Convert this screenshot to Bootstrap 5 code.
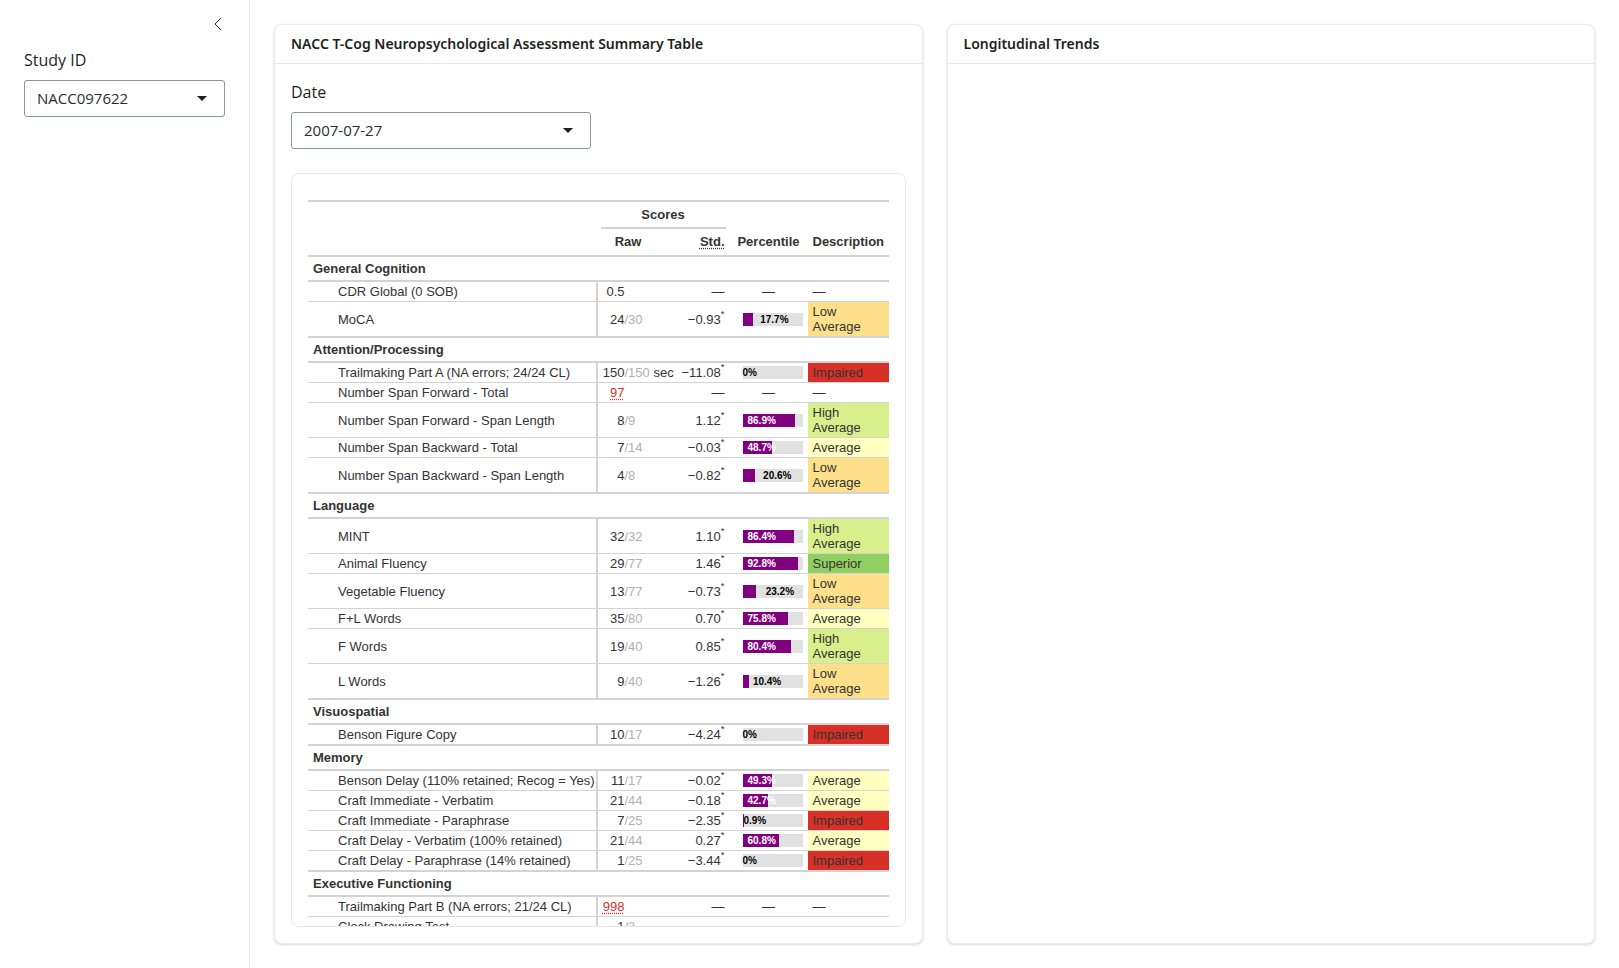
<!DOCTYPE html>
<html lang="en">
<head>
<meta charset="utf-8">
<meta name="viewport" content="width=device-width, initial-scale=1">
<title>NACC T-Cog Neuropsychological Assessment</title>
<link href="https://cdn.jsdelivr.net/npm/bootstrap@5.3.0/dist/css/bootstrap.min.css" rel="stylesheet">
<style>
  body { font-family: "Open Sans", "Noto Sans", sans-serif; font-size: 16px; line-height: 24px; color: #1d1f21; background: #fff; }
  .side-panel { width: 250px; border-right: 1px solid #e6e6e6; padding: 16px 24px; }
  .collapse-btn { width: 16px; height: 16px; line-height: 0; margin-right: -1px; }
  .picker { appearance: none; height: 37px; padding: 0 12px 2px; font-size: 15px; color: #2b2d30; border: 1px solid #8d959e; border-radius: 3px;
    background: #fff url("data:image/svg+xml,%3Csvg xmlns='http://www.w3.org/2000/svg' viewBox='0 0 10 5'%3E%3Cpath d='M0 0h10L5 5z' fill='%231d1f21'/%3E%3C/svg%3E") no-repeat right 17px top 15px / 10px 5px; }
  .picker-date { width: 300px; max-width: 100%; }
  .panel { border: 1px solid #ebebeb; border-radius: 8px; box-shadow: 0 1px 3px rgba(0,0,0,.16); }
  .panel > .card-header { background: none; border-bottom: 1px solid #e8e8e8; padding: 8px 16px; font-family: "Noto Sans", "Open Sans", sans-serif; font-size: 14px; line-height: 22px; font-weight: 600; }
  .table-frame { border: 1px solid #e8e8e8; border-radius: 8px; padding: 26px 16px 0; overflow: auto; scrollbar-width: none; }
  .scores { width: 100%; table-layout: fixed; border-collapse: separate; border-spacing: 0; border-top: 2px solid #d3d3d3;
    font-family: "Liberation Sans", Arial, sans-serif; font-size: 13px; line-height: 15px; color: #333; }
  .c-raw { width: 78px; } .c-std { width: 54px; } .c-pct { width: 78px; } .c-desc { width: 81px; }
  .scores th { font-weight: 700; white-space: nowrap; }
  .scores thead th { padding: 5px; }
  .scores thead .spanner { padding: 0 4px 0 3px; }
  .spanner div { padding: 5px 0; border-bottom: 2px solid #d3d3d3; }
  .scores thead tr:last-child th, .scores thead th[rowspan] { border-bottom: 2px solid #d3d3d3; padding-bottom: 6px; }
  .scores thead .raw-head { padding-right: 22px; }
  .scores .domain th { padding: 4px 5px; border-bottom: 2px solid #d3d3d3; }
  .scores td, .scores .test { padding: 2px 5px; border-bottom: 1px solid #d3d3d3; vertical-align: middle; }
  .scores .test { font-weight: 400; padding-left: 30px; padding-right: 0; border-right: 2px solid #d3d3d3; }
  .scores td:nth-child(2) { padding-right: 0; white-space: nowrap; }
  .scores td:nth-child(3) { padding-left: 0; text-align: right; white-space: nowrap; }
  .scores td:nth-child(4) { text-align: center; }
  .scores .end > * { border-bottom-width: 2px; }
  .scores b { display: inline-block; width: 22px; text-align: right; font-weight: 400; }
  .scores i { font-style: normal; color: #b0b0b0; }
  .scores sup { top: -7px; }
  .scores abbr { cursor: help; text-decoration: underline dotted; text-underline-offset: 2px; }
  .miss { color: #d7302f; }
  .meter-bar { width: 60px; height: 13px; margin-left: auto; background: #e1e1e1; position: relative; text-align: left; font-size: 10px; line-height: 13px; font-weight: 700; color: #000; }
  .meter-bar div { height: 100%; background: purple; }
  .meter-bar span { position: absolute; top: 0; left: 5px; color: #fff; }
  .meter-bar .out { color: #000; }
  .lowavg { background: #fee08b; } .highavg { background: #d9ef8b; } .avg { background: #ffffbf; } .sup { background: #91cf60; } .imp { background: #d73027; }
</style>
</head>
<body>
<div class="d-flex vh-100">
  <aside class="side-panel flex-shrink-0">
    <div class="d-flex justify-content-end mb-3">
      <button type="button" class="collapse-btn btn border-0 p-0" aria-label="Toggle sidebar">
        <svg width="16" height="16" viewBox="0 0 16 16" fill="none" stroke="#1d1f21" stroke-linecap="round" stroke-linejoin="round"><path d="M11 2 5 8l6 6"/></svg>
      </button>
    </div>
    <label for="study" class="d-block mb-2">Study ID</label>
    <select id="study" class="picker w-100"><option>NACC097622</option></select>
  </aside>
  <main class="d-flex flex-grow-1 gap-4 p-4" style="min-width:0">
    <section class="card panel flex-fill w-50">
      <div class="card-header">NACC T-Cog Neuropsychological Assessment Summary Table</div>
      <div class="card-body d-flex flex-column p-3 overflow-hidden">
        <label for="date" class="mb-2">Date</label>
        <select id="date" class="picker picker-date flex-shrink-0 mb-4"><option>2007-07-27</option></select>
        <div class="table-frame flex-fill">
          <table class="scores">
            <colgroup><col><col class="c-raw"><col class="c-std"><col class="c-pct"><col class="c-desc"></colgroup>
            <thead>
              <tr><th rowspan="2"></th><th colspan="2" class="spanner text-center"><div>Scores</div></th><th></th><th></th></tr>
              <tr><th class="raw-head text-center">Raw</th><th class="text-end"><abbr title="Standardized score">Std.</abbr></th><th class="text-center">Percentile</th><th>Description</th></tr>
            </thead>
            <tbody>
              <tr class="domain"><th colspan="5">General Cognition</th></tr>
              <tr><th class="test">CDR Global (0 SOB)</th><td><b>0.5</b></td><td>—</td><td>—</td><td>—</td></tr>
              <tr class="end"><th class="test">MoCA</th><td><b>24</b><i>/30</i></td><td>−0.93<sup>*</sup></td><td><div class="meter-bar"><div style="width:17.7%"></div><span class="out" style="left:17.7px">17.7%</span></div></td><td class="lowavg">Low Average</td></tr>

              <tr class="domain"><th colspan="5">Attention/Processing</th></tr>
              <tr><th class="test">Trailmaking Part A (NA errors; 24/24 CL)</th><td><b>150</b><i>/150</i> sec</td><td>−11.08<sup>*</sup></td><td><div class="meter-bar"><span class="out" style="left:0">0%</span></div></td><td class="imp">Impaired</td></tr>
              <tr><th class="test">Number Span Forward - Total</th><td><b><abbr class="miss" title="Not administered">97</abbr></b></td><td>—</td><td>—</td><td>—</td></tr>
              <tr><th class="test">Number Span Forward - Span Length</th><td><b>8</b><i>/9</i></td><td>1.12<sup>*</sup></td><td><div class="meter-bar"><div style="width:86.9%"></div><span>86.9%</span></div></td><td class="highavg">High Average</td></tr>
              <tr><th class="test">Number Span Backward - Total</th><td><b>7</b><i>/14</i></td><td>−0.03<sup>*</sup></td><td><div class="meter-bar"><div style="width:48.7%"></div><span>48.7%</span></div></td><td class="avg">Average</td></tr>
              <tr class="end"><th class="test">Number Span Backward - Span Length</th><td><b>4</b><i>/8</i></td><td>−0.82<sup>*</sup></td><td><div class="meter-bar"><div style="width:20.6%"></div><span class="out" style="left:20.6px">20.6%</span></div></td><td class="lowavg">Low Average</td></tr>

              <tr class="domain"><th colspan="5">Language</th></tr>
              <tr><th class="test">MINT</th><td><b>32</b><i>/32</i></td><td>1.10<sup>*</sup></td><td><div class="meter-bar"><div style="width:86.4%"></div><span>86.4%</span></div></td><td class="highavg">High Average</td></tr>
              <tr><th class="test">Animal Fluency</th><td><b>29</b><i>/77</i></td><td>1.46<sup>*</sup></td><td><div class="meter-bar"><div style="width:92.8%"></div><span>92.8%</span></div></td><td class="sup">Superior</td></tr>
              <tr><th class="test">Vegetable Fluency</th><td><b>13</b><i>/77</i></td><td>−0.73<sup>*</sup></td><td><div class="meter-bar"><div style="width:23.2%"></div><span class="out" style="left:23.2px">23.2%</span></div></td><td class="lowavg">Low Average</td></tr>
              <tr><th class="test">F+L Words</th><td><b>35</b><i>/80</i></td><td>0.70<sup>*</sup></td><td><div class="meter-bar"><div style="width:75.8%"></div><span>75.8%</span></div></td><td class="avg">Average</td></tr>
              <tr><th class="test">F Words</th><td><b>19</b><i>/40</i></td><td>0.85<sup>*</sup></td><td><div class="meter-bar"><div style="width:80.4%"></div><span>80.4%</span></div></td><td class="highavg">High Average</td></tr>
              <tr class="end"><th class="test">L Words</th><td><b>9</b><i>/40</i></td><td>−1.26<sup>*</sup></td><td><div class="meter-bar"><div style="width:10.4%"></div><span class="out" style="left:10.4px">10.4%</span></div></td><td class="lowavg">Low Average</td></tr>

              <tr class="domain"><th colspan="5">Visuospatial</th></tr>
              <tr class="end"><th class="test">Benson Figure Copy</th><td><b>10</b><i>/17</i></td><td>−4.24<sup>*</sup></td><td><div class="meter-bar"><span class="out" style="left:0">0%</span></div></td><td class="imp">Impaired</td></tr>

              <tr class="domain"><th colspan="5">Memory</th></tr>
              <tr><th class="test">Benson Delay (110% retained; Recog = Yes)</th><td><b>11</b><i>/17</i></td><td>−0.02<sup>*</sup></td><td><div class="meter-bar"><div style="width:49.3%"></div><span>49.3%</span></div></td><td class="avg">Average</td></tr>
              <tr><th class="test">Craft Immediate - Verbatim</th><td><b>21</b><i>/44</i></td><td>−0.18<sup>*</sup></td><td><div class="meter-bar"><div style="width:42.7%"></div><span>42.7%</span></div></td><td class="avg">Average</td></tr>
              <tr><th class="test">Craft Immediate - Paraphrase</th><td><b>7</b><i>/25</i></td><td>−2.35<sup>*</sup></td><td><div class="meter-bar"><div style="width:0.9%"></div><span class="out" style="left:0.9px">0.9%</span></div></td><td class="imp">Impaired</td></tr>
              <tr><th class="test">Craft Delay - Verbatim (100% retained)</th><td><b>21</b><i>/44</i></td><td>0.27<sup>*</sup></td><td><div class="meter-bar"><div style="width:60.8%"></div><span>60.8%</span></div></td><td class="avg">Average</td></tr>
              <tr class="end"><th class="test">Craft Delay - Paraphrase (14% retained)</th><td><b>1</b><i>/25</i></td><td>−3.44<sup>*</sup></td><td><div class="meter-bar"><span class="out" style="left:0">0%</span></div></td><td class="imp">Impaired</td></tr>

              <tr class="domain"><th colspan="5">Executive Functioning</th></tr>
              <tr><th class="test">Trailmaking Part B (NA errors; 21/24 CL)</th><td><b><abbr class="miss" title="Not administered">998</abbr></b></td><td>—</td><td>—</td><td>—</td></tr>
              <tr class="end"><th class="test">Clock Drawing Test</th><td><b>1</b><i>/3</i></td><td></td><td></td><td></td></tr>
            </tbody>
          </table>
        </div>
      </div>
    </section>
    <section class="card panel flex-fill w-50">
      <div class="card-header">Longitudinal Trends</div>
      <div class="card-body"></div>
    </section>
  </main>
</div>
<script src="https://cdn.jsdelivr.net/npm/bootstrap@5.3.0/dist/js/bootstrap.bundle.min.js"></script>
</body>
</html>
